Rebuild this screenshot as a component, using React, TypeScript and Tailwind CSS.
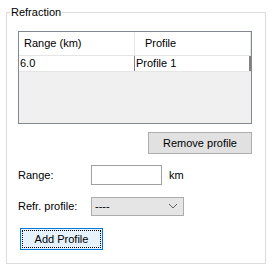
import React from 'react';

const font = { fontFamily: '"Liberation Sans", Arial, sans-serif' };

const ProfileGrid: React.FC = () => {
  return (
    <div className="ml-[11px] mt-[12px] flex h-[93px] w-[234px] flex-col border border-[#828790] bg-[#f0f0f0]">
      <div className="flex h-[24px] border-b border-[#e5e5e5] bg-white">
        <div className="flex w-[116px] items-center border-r border-[#e5e5e5] pl-[5px]">Range (km)</div>
        <div className="flex flex-1 items-center border-r border-[#e5e5e5] pl-[10px]">Profile</div>
      </div>
      <div className="flex h-[16px] border-b border-[#e5e5e5] bg-white">
        <div className="flex w-[116px] items-center border-r border-[#828282] pl-[1px]">6.0</div>
        <div className="flex flex-1 items-center border-r-2 border-[#828282] pl-[1px]">Profile 1</div>
      </div>
    </div>
  );
};

export default function App() {
  return (
    <div className="h-[270px] w-[272px] bg-white pt-[5px] text-[11px] text-black" style={font}>
      <fieldset className="mx-[6px] h-[259px] w-[260px] border border-[#dcdcdc]">
        <legend className="ml-[3px] px-[1px] leading-[14px]">Refraction</legend>

        <ProfileGrid />

        <div className="mt-[8px] flex w-[245px] justify-end">
          <button className="h-[22px] w-[104px] border border-[#adadad] bg-[#e1e1e1] leading-none">
            Remove profile
          </button>
        </div>

        <div className="mt-[11px] flex h-[20px] items-center">
          <span className="ml-[11px] w-[73px]">Range:</span>
          <div className="h-[20px] w-[71px] border border-[#a0a0a0] bg-white" />
          <span className="ml-[7px]">km</span>
        </div>

        <div className="mt-[11px] flex h-[20px] items-center">
          <span className="ml-[11px] w-[73px]">Refr. profile:</span>
          <div className="flex h-[19px] w-[93px] items-center justify-between border border-[#acacac] bg-[#e5e5e5] pl-[3px] pr-[5px]">
            <span>----</span>
            <svg width="10" height="6" viewBox="0 0 10 6" fill="none">
              <path d="M1 1 L5 5 L9 1" stroke="#606060" strokeWidth="1" />
            </svg>
          </div>
        </div>

        <div className="ml-[13px] mt-[12px]">
          <button className="flex h-[22px] w-[83px] items-stretch border border-[#0078d7] bg-[#e5f1fb] p-[1px]">
            <span className="flex flex-1 items-center justify-center border border-dotted border-black leading-none">
              Add Profile
            </span>
          </button>
        </div>
      </fieldset>
    </div>
  );
}
